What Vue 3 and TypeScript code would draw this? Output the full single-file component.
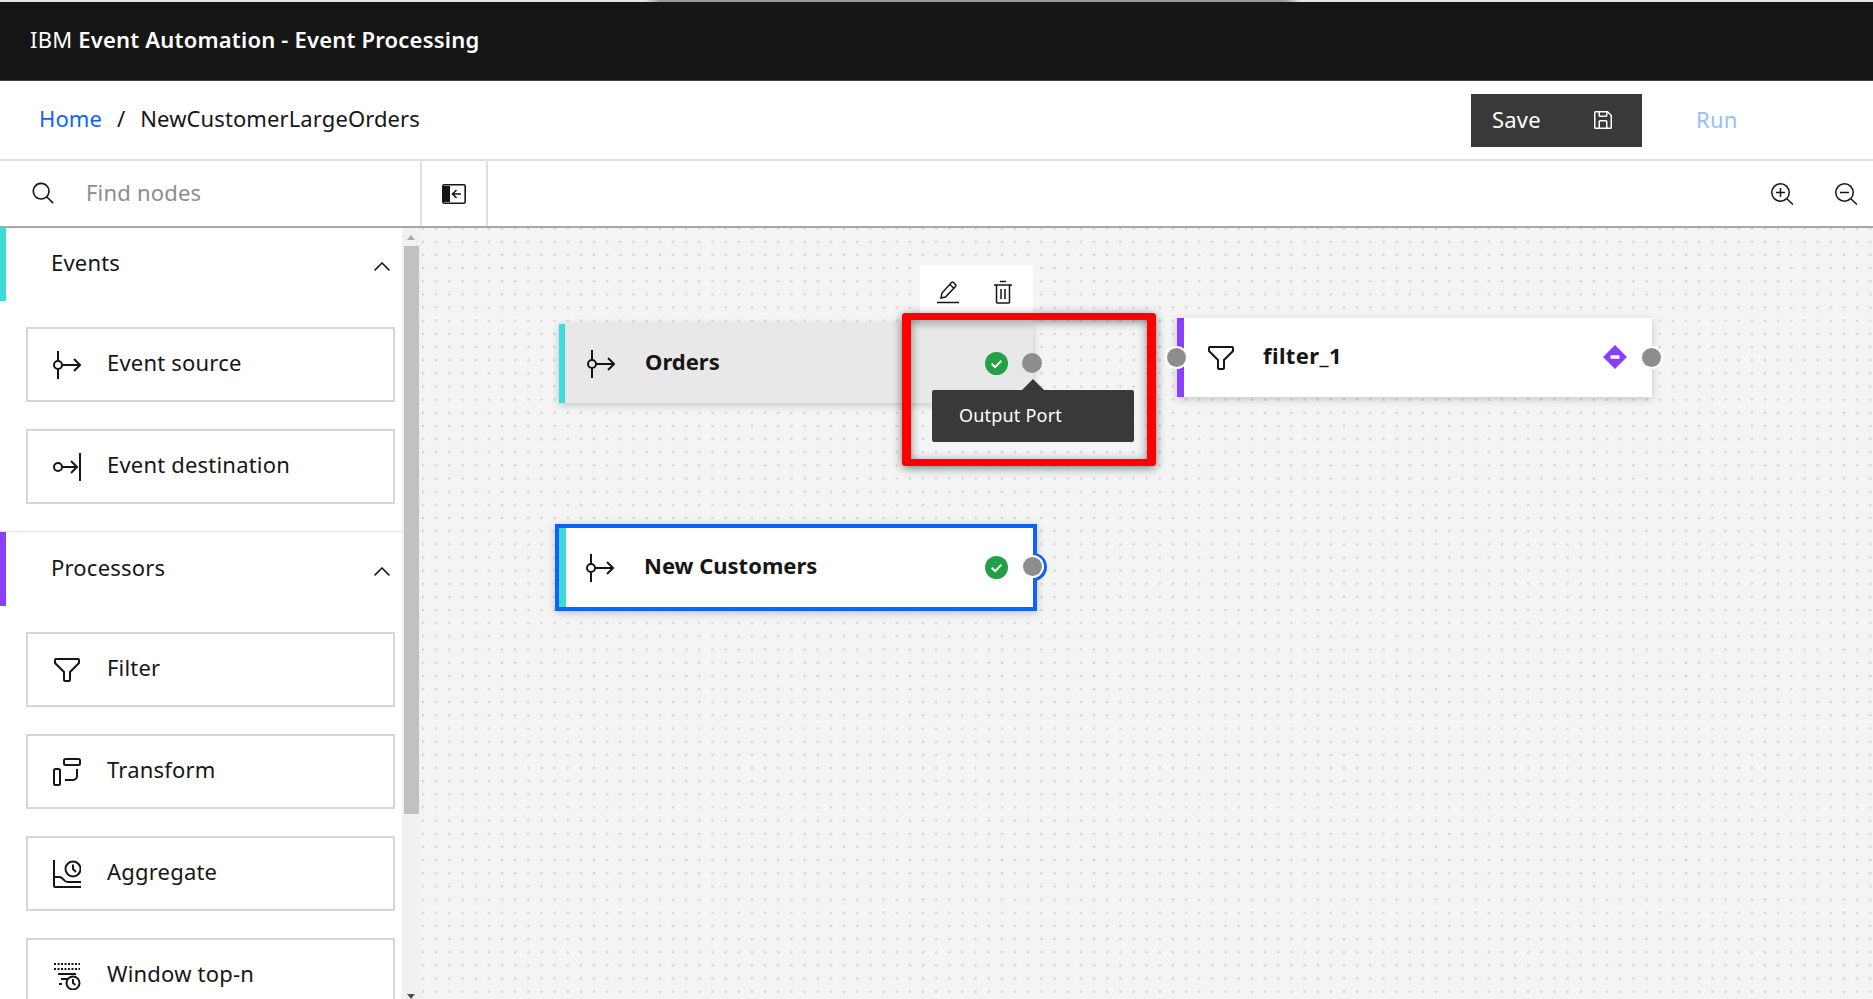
<script setup lang="ts">
interface PaletteItem {
  label: string
  icon: string
}

const eventItems: PaletteItem[] = [
  { label: 'Event source', icon: 'source' },
  { label: 'Event destination', icon: 'destination' },
]

const processorItems: PaletteItem[] = [
  { label: 'Filter', icon: 'filter' },
  { label: 'Transform', icon: 'transform' },
  { label: 'Aggregate', icon: 'aggregate' },
  { label: 'Window top-n', icon: 'window' },
]
</script>

<template>
  <div class="page">
    <div class="edge"></div>
    <header class="topbar">
      <span class="brand">IBM <strong>Event Automation - Event Processing</strong></span>
    </header>

    <div class="crumbs">
      <nav class="trail">
        <a class="home">Home</a>
        <span class="slash">/</span>
        <span>NewCustomerLargeOrders</span>
      </nav>
      <div class="actions">
        <button class="save">
          <span class="save-label">Save</span>
          <svg class="save-icon" viewBox="0 0 32 32" fill="currentColor">
            <path d="M27.71 9.29l-5-5A1 1 0 0 0 22 4H6a2 2 0 0 0-2 2v20a2 2 0 0 0 2 2h20a2 2 0 0 0 2-2V10a1 1 0 0 0-.29-.71zM12 6h8v4h-8zm8 20h-8v-8h8zm2 0v-8a2 2 0 0 0-2-2h-8a2 2 0 0 0-2 2v8H6V6h4v4a2 2 0 0 0 2 2h8a2 2 0 0 0 2-2V6.41l4 4V26z" />
          </svg>
        </button>
        <span class="run">Run</span>
      </div>
    </div>

    <div class="toolbar">
      <div class="search">
        <svg class="search-icon" viewBox="0 0 32 32" fill="#161616">
          <path d="M29 27.59l-7.55-7.55a11.02 11.02 0 1 0-1.41 1.41L27.59 29zM4 13a9 9 0 1 1 9 9 9 9 0 0 1-9-9z" />
        </svg>
        <span class="placeholder">Find nodes</span>
      </div>
      <div class="collapse">
        <svg viewBox="0 0 24 20" width="24" height="20">
          <rect x="0.8" y="0.8" width="22.4" height="18.4" rx="1.5" fill="#fff" stroke="#161616" stroke-width="1.6" />
          <path d="M1 2h7v16H1z" fill="#161616" />
          <path d="M19 10h-8M14.5 6l-4 4 4 4" fill="none" stroke="#161616" stroke-width="1.6" />
        </svg>
      </div>
      <div class="zooms">
        <svg class="zoom-icon" viewBox="0 0 23 22" fill="none" stroke="#161616" stroke-width="1.5">
          <circle cx="9.5" cy="9.5" r="8.7" />
          <path d="M16 16l6 5.5M5 9.5h9M9.5 5v9" />
        </svg>
        <svg class="zoom-icon" viewBox="0 0 23 22" fill="none" stroke="#161616" stroke-width="1.5">
          <circle cx="9.5" cy="9.5" r="8.7" />
          <path d="M16 16l6 5.5M5 9.5h9" />
        </svg>
      </div>
    </div>

    <div class="workspace">
      <aside class="sidebar">
        <div class="palette">
          <section class="group group-events">
            <div class="group-head">
              <span>Events</span>
              <svg class="chevron" viewBox="0 0 16 9" fill="none" stroke="#161616" stroke-width="1.5"><path d="M0.6 8.4L8 1l7.4 7.4" /></svg>
            </div>
            <ul class="items">
              <li v-for="item in eventItems" :key="item.label" class="item">
                <svg class="item-icon" viewBox="0 0 28 28" fill="none" stroke="#161616" stroke-width="2">
                  <template v-if="item.icon === 'source'">
                    <circle cx="5" cy="14" r="4" />
                    <path d="M5 0v10M5 18v10M9 14h18M21 8l6 6-6 6" />
                  </template>
                  <template v-else>
                    <circle cx="5" cy="14" r="4" />
                    <path d="M9 14h15M18 8l6 6-6 6M27 0v28" />
                  </template>
                </svg>
                <span class="item-label">{{ item.label }}</span>
              </li>
            </ul>
          </section>
          <section class="group group-processors">
            <div class="group-head">
              <span>Processors</span>
              <svg class="chevron" viewBox="0 0 16 9" fill="none" stroke="#161616" stroke-width="1.5"><path d="M0.6 8.4L8 1l7.4 7.4" /></svg>
            </div>
            <ul class="items">
              <li v-for="item in processorItems" :key="item.label" class="item">
                <svg class="item-icon" viewBox="0 0 28 28" fill="none" stroke="#161616" stroke-width="2">
                  <path v-if="item.icon === 'filter'" d="M3 3h22a1 1 0 0 1 1 1v3l-9 9v8a1 1 0 0 1-1 1h-4a1 1 0 0 1-1-1v-8L2 7V4a1 1 0 0 1 1-1z" />
                  <template v-else-if="item.icon === 'transform'">
                    <rect x="11" y="1" width="16" height="6" rx="1.5" />
                    <rect x="1" y="11" width="6" height="16" rx="1.5" />
                    <path d="M24 11v7a4 4 0 0 1-4 4h-8" />
                  </template>
                  <template v-else-if="item.icon === 'aggregate'">
                    <path d="M1 0v26a1 1 0 0 0 1 1h26" />
                    <path d="M1 17h5a5 5 0 0 1 4 2l1 1a5 5 0 0 0 4 2h13" />
                    <circle cx="20" cy="9" r="7.5" />
                    <path d="M20 4.5V9l3 3" />
                  </template>
                  <template v-else>
                    <path d="M1 2h26M1 7h26" stroke-dasharray="2 1.5" />
                    <path d="M5 12h18M8 17h7M6 22h3" />
                    <circle cx="20" cy="21" r="6.5" />
                    <path d="M20 17v4l2.5 2" />
                  </template>
                </svg>
                <span class="item-label">{{ item.label }}</span>
              </li>
            </ul>
          </section>
        </div>
        <div class="scrollbar">
          <span class="arrow-up"></span>
          <span class="thumb"></span>
          <span class="arrow-down"></span>
        </div>
      </aside>

      <main class="canvas">
        <div class="node-tools">
          <svg class="tool" viewBox="0 0 24 24" fill="none" stroke="#161616" stroke-width="1.5">
            <path d="M1 22.5h22M5 18l1-5L15.5 2.5a1.5 1.5 0 0 1 2 0l2 2a1.5 1.5 0 0 1 0 2L9.5 17z" />
            <path d="M14 4.5l4 4" />
          </svg>
          <svg class="tool" viewBox="0 0 24 24" fill="none" stroke="#161616" stroke-width="1.5">
            <path d="M3 5h18M9 1.5h6M5.5 5v17a1 1 0 0 0 1 1h11a1 1 0 0 0 1-1V5M10 9v10M14 9v10" />
          </svg>
        </div>

        <div class="node node-orders">
          <svg class="node-icon" viewBox="0 0 28 28" fill="none" stroke="#161616" stroke-width="2">
            <circle cx="5" cy="14" r="4" />
            <path d="M5 0v10M5 18v10M9 14h18M21 8l6 6-6 6" />
          </svg>
          <span class="node-name">Orders</span>
        </div>
        <span class="status status-orders">
          <svg viewBox="0 0 20 20"><circle cx="10" cy="10" r="10" fill="#24a148" /><path d="M5.8 10.2l3 3 5.4-5.6" fill="none" stroke="#fff" stroke-width="1.6" /></svg>
        </span>
        <span class="port port-orders"></span>

        <div class="tip">
          <span class="tip-arrow"></span>
          Output Port
        </div>
        <div class="highlight"></div>

        <div class="node node-filter">
          <svg class="node-icon" viewBox="0 0 28 28" fill="none" stroke="#161616" stroke-width="2">
            <path d="M3 3h22a1 1 0 0 1 1 1v3l-9 9v8a1 1 0 0 1-1 1h-4a1 1 0 0 1-1-1v-8L2 7V4a1 1 0 0 1 1-1z" />
          </svg>
          <span class="node-name">filter_1</span>
        </div>
        <span class="port port-in"></span>
        <span class="port port-filter"></span>
        <span class="status status-filter">
          <svg viewBox="0 0 24 24"><path d="M12 0l12 12-12 12L0 12z" fill="#8a3ffc" /><rect x="7.5" y="10.2" width="9" height="3.6" rx="0.6" fill="#fff" /></svg>
        </span>

        <span class="port-ring"></span>
        <div class="node node-customers">
          <svg class="node-icon" viewBox="0 0 28 28" fill="none" stroke="#161616" stroke-width="2">
            <circle cx="5" cy="14" r="4" />
            <path d="M5 0v10M5 18v10M9 14h18M21 8l6 6-6 6" />
          </svg>
          <span class="node-name">New Customers</span>
        </div>
        <span class="status status-customers">
          <svg viewBox="0 0 20 20"><circle cx="10" cy="10" r="10" fill="#24a148" /><path d="M5.8 10.2l3 3 5.4-5.6" fill="none" stroke="#fff" stroke-width="1.6" /></svg>
        </span>
        <span class="port port-customers"></span>
      </main>
    </div>
  </div>
</template>

<style>
html,
body {
  margin: 0;
  overflow: hidden;
  background: #fff;
}
</style>

<style scoped>
.page {
  width: 1873px;
  height: 999px;
  display: flex;
  flex-direction: column;
  overflow: hidden;
  font-family: 'Noto Sans', Roboto, sans-serif;
  color: #161616;
  font-size: 22px;
  letter-spacing: 0.2px;
}

.edge {
  height: 2px;
  flex: none;
  background: linear-gradient(90deg, #e4e4e4 645px, #9a9a9a 660px, #9a9a9a 1285px, #e4e4e4 1300px);
}

.topbar {
  height: 79px;
  box-sizing: border-box;
  flex: none;
  display: flex;
  align-items: center;
  padding: 0 0 4px 30px;
  background: #161616;
  border-bottom: 1px solid #444;
  color: #fff;
}

.brand strong {
  font-weight: 600;
}

.crumbs {
  height: 80px;
  box-sizing: border-box;
  flex: none;
  display: flex;
  align-items: center;
  justify-content: space-between;
  padding-left: 40px;
  border-bottom: 2px solid #e0e0e0;
}

.trail {
  display: flex;
  gap: 15px;
  align-items: center;
  padding-bottom: 4px;
  margin-left: -1px;
  letter-spacing: 0.1px;
}

.home {
  color: #0f62fe;
}

.actions {
  display: flex;
  align-items: center;
  width: 402px;
}

.save {
  width: 171px;
  height: 53px;
  display: flex;
  align-items: center;
  justify-content: space-between;
  padding: 0 27px 0 21px;
  border: 0;
  background: #393939;
  color: #fff;
  font: inherit;
  letter-spacing: inherit;
}

.save-label {
  margin-bottom: 3px;
}

.save-icon {
  width: 24px;
  height: 24px;
}

.run {
  margin: 0 0 3px 54px;
  color: #97bcff;
}

.toolbar {
  height: 67px;
  box-sizing: border-box;
  flex: none;
  display: flex;
  align-items: stretch;
  position: relative;
  z-index: 1;
  border-bottom: 2px solid #a8a8a8;
}

.search {
  width: 422px;
  display: flex;
  align-items: center;
  gap: 30px;
  padding-left: 31px;
  box-sizing: border-box;
  border-right: 2px solid #e0e0e0;
}

.search-icon {
  width: 25px;
  height: 25px;
}

.placeholder {
  color: #8d8d8d;
  margin-bottom: 4px;
}

.collapse {
  width: 66px;
  display: flex;
  align-items: center;
  justify-content: center;
  box-sizing: border-box;
  border-right: 2px solid #e0e0e0;
}

.zooms {
  margin-left: auto;
  display: flex;
  align-items: center;
  gap: 41px;
  padding-right: 15px;
}

.zoom-icon {
  width: 23px;
  height: 22px;
}

.workspace {
  flex: 1;
  min-height: 0;
  margin-top: -1px;
  display: flex;
}

.sidebar {
  width: 421px;
  flex: none;
  display: flex;
  box-sizing: border-box;
  overflow: hidden;
}

.palette {
  width: 402px;
  flex: none;
}

.group {
  position: relative;
}

.group-head {
  height: 74px;
  display: flex;
  align-items: center;
  justify-content: space-between;
  padding: 0 12px 5px 51px;
  box-sizing: border-box;
}

.group-events .group-head,
.group-processors .group-head {
  border-left: 6px solid #3ddbd9;
  padding-left: 45px;
}

.group-processors .group-head {
  border-left-color: #8a3ffc;
}

.group-processors {
  border-top: 1px solid #e0e0e0;
}

.chevron {
  width: 16px;
  height: 9px;
  margin-top: 9px;
}

.items {
  list-style: none;
  margin: 0;
  padding: 26px 7px 27px 26px;
  display: flex;
  flex-direction: column;
  gap: 27px;
}

.item {
  height: 75px;
  display: flex;
  align-items: center;
  gap: 26px;
  padding-left: 25px;
  border: 2px solid #d6d6d6;
  box-sizing: border-box;
  flex: none;
}

.item-icon {
  width: 28px;
  height: 28px;
  flex: none;
}

.item-label {
  margin-bottom: 5px;
}

.scrollbar {
  width: 19px;
  flex: none;
  position: relative;
  background: #f1f1f1;
}

.thumb {
  position: absolute;
  left: 2px;
  right: 2px;
  top: 19px;
  height: 568px;
  background: #c1c1c1;
}

.arrow-up,
.arrow-down {
  position: absolute;
  left: 5px;
  width: 0;
  height: 0;
  border-left: 4px solid transparent;
  border-right: 4px solid transparent;
}

.arrow-up {
  top: 8px;
  border-bottom: 5px solid #a8a8a8;
}

.arrow-down {
  bottom: 0;
  border-top: 5px solid #505050;
}

.canvas {
  flex: 1;
  position: relative;
  background-color: #f4f4f4;
  background-image: radial-gradient(circle, #d4d4d4 0.8px, #e6e6e6 1.3px, transparent 1.8px);
  background-size: 13.17px 13.17px;
  background-position: -4.5px -5px;
  overflow: hidden;
}

/* canvas origin is x=421, y=227 in the screenshot */
.node {
  position: absolute;
  display: flex;
  align-items: center;
  box-sizing: border-box;
  background: #fff;
  box-shadow: 0 2px 8px rgba(0, 0, 0, 0.2);
  letter-spacing: 0;
}

.node-icon {
  width: 28px;
  height: 28px;
  flex: none;
}

.node-name {
  font-weight: 700;
  margin-bottom: 6px;
}

.node-orders {
  left: 138px;
  top: 97px;
  width: 474px;
  height: 79px;
  padding-left: 22px;
  gap: 30px;
  background: #e8e8e8;
  border-left: 6px solid #3ddbd9;
}

.node-filter {
  left: 756px;
  top: 91px;
  width: 475px;
  height: 79px;
  padding-left: 23px;
  gap: 28px;
  border-left: 7px solid #8a3ffc;
}

.node-filter .node-name {
  letter-spacing: 0.4px;
}

.node-customers {
  left: 134px;
  top: 297px;
  width: 482px;
  height: 87px;
  padding-left: 27px;
  gap: 30px;
  border: 4px solid #0f62fe;
  box-shadow:
    inset 7px 0 0 #3ddbd9,
    0 2px 8px rgba(0, 0, 0, 0.2);
}

.node-tools {
  position: absolute;
  left: 499px;
  top: 38px;
  width: 113px;
  height: 60px;
  display: flex;
  align-items: flex-start;
  justify-content: center;
  gap: 31px;
  padding: 15px 2px 0 0;
  box-sizing: border-box;
  background: #fff;
}

.tool {
  width: 24px;
  height: 24px;
}

.status {
  position: absolute;
  display: block;
  line-height: 0;
}

.status svg {
  width: 100%;
  height: 100%;
}

.status-orders {
  left: 564px;
  top: 125px;
  width: 23px;
  height: 23px;
}

.status-customers {
  left: 564px;
  top: 329px;
  width: 23px;
  height: 23px;
}

.status-filter {
  left: 1182px;
  top: 118px;
  width: 24px;
  height: 24px;
}

.port {
  position: absolute;
  width: 19px;
  height: 19px;
  border-radius: 50%;
  background: #8d8d8d;
  box-shadow: 0 0 0 2px #fff;
}

.port-orders {
  left: 601px;
  top: 126px;
  box-shadow: none;
  width: 20px;
  height: 20px;
}

.port-in {
  left: 746px;
  top: 121px;
}

.port-filter {
  left: 1221px;
  top: 121px;
}

.port-customers {
  left: 602px;
  top: 330px;
}

.port-ring {
  position: absolute;
  left: 598px;
  top: 326px;
  width: 28px;
  height: 28px;
  box-sizing: border-box;
  border-radius: 50%;
  background: #fff;
  border: 4px solid #0f62fe;
}

.tip {
  position: absolute;
  left: 511px;
  top: 163px;
  width: 202px;
  height: 52px;
  padding: 0 0 2px 27px;
  box-sizing: border-box;
  display: flex;
  align-items: center;
  background: #393939;
  color: #fff;
  font-size: 18px;
  border-radius: 2px;
}

.tip-arrow {
  position: absolute;
  left: 90px;
  top: -11px;
  width: 0;
  height: 0;
  border-left: 11px solid transparent;
  border-right: 11px solid transparent;
  border-bottom: 11px solid #393939;
}

.highlight {
  position: absolute;
  left: 481px;
  top: 86px;
  width: 254px;
  height: 153px;
  box-sizing: border-box;
  border-style: solid;
  border-color: #f00;
  border-width: 7px 9px;
  border-radius: 3px;
  box-shadow:
    0 2px 10px rgba(0, 0, 0, 0.5),
    inset 0 2px 10px rgba(0, 0, 0, 0.45);
}
</style>
